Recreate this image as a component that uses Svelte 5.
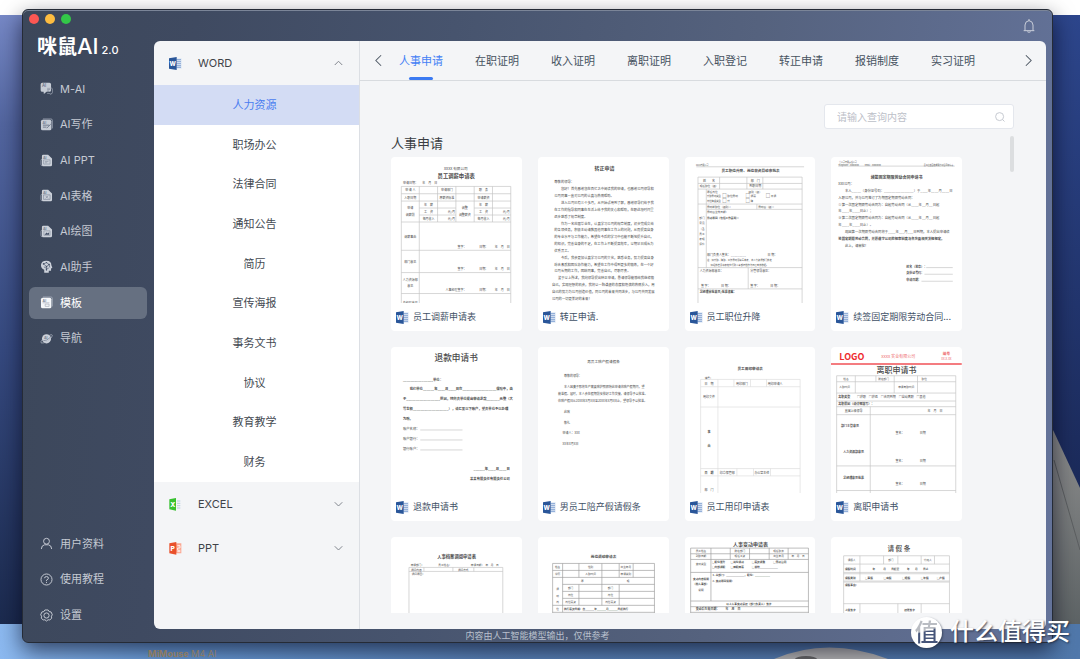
<script>
  const nav = [
    { id: 'chat', label: 'M-AI' },
    { id: 'write', label: 'AI写作' },
    { id: 'ppt', label: 'AI PPT' },
    { id: 'sheet', label: 'AI表格' },
    { id: 'draw', label: 'AI绘图' },
    { id: 'helper', label: 'AI助手' },
    { id: 'template', label: '模板' },
    { id: 'planet', label: '导航' }
  ];
  const tools = [
    { id: 'user', label: '用户资料' },
    { id: 'help', label: '使用教程' },
    { id: 'gear', label: '设置' }
  ];
  const categories = ['人力资源', '职场办公', '法律合同', '通知公告', '简历', '宣传海报', '事务文书', '协议', '教育教学', '财务'];
  const tabs = ['人事申请', '在职证明', '收入证明', '离职证明', '入职登记', '转正申请', '报销制度', '实习证明'];

  let activeNav = $state('template');
  let activeCategory = $state('人力资源');
  let activeTab = $state('人事申请');
  let query = $state('');

  // Each preview: `grid` is the ruled lines, `text` rows are [x, baseline, size, string, anchor, weight, colour].
  const docs = [
    {
      name: '员工调薪申请表',
      grid: 'M31 439V88H360V439M31 110H360M31 132H360M31 195H360M31 280H360M31 347H360M31 410H360M85 88V439M140 88V195M195 88V195M250 88V195M305 88V195M85 153H195M85 174H195M250 153H360M250 174H360',
      text: [
        [195, 38, 11, 'XXXX 有限公司', 'm'], [196, 63, 16, '员工调薪申请表', 'm', 700],
        [36, 81, 9, '申请日期：　　年　月　日'],
        [58, 103, 9, '申 请 人', 'm'], [168, 103, 9, '申请部门', 'm'], [278, 103, 9, '职　务', 'm'],
        [58, 125, 9, '入职日期', 'm'], [168, 125, 9, '原薪资标准', 'm'], [278, 125, 9, '申请薪资', 'm'],
        [58, 157, 9, '申请', 'm'], [58, 178, 9, '调薪前', 'm'], [113, 146, 9, '年　薪', 'm'], [113, 167, 9, '工　资', 'm'], [113, 188, 9, '每月收入', 'm'],
        [192, 167, 9, '元/月', 'e'], [192, 188, 9, '元/月', 'e'], [222, 157, 9, '调整', 'm'], [222, 178, 9, '调整薪资', 'm'],
        [278, 146, 9, '年　薪', 'm'], [278, 167, 9, '工　资', 'm'], [278, 188, 9, '每月收入', 'm'], [357, 167, 9, '元/月', 'e'], [357, 188, 9, '元/月', 'e'],
        [58, 242, 9, '调薪事由', 'm'], [200, 272, 9, '签字：'], [265, 272, 9, '日期：'], [357, 272, 9, '年　月　日', 'e'],
        [58, 317, 9, '部门意见', 'm'], [200, 340, 9, '签字：'], [265, 340, 9, '日期：'], [357, 340, 9, '年　月　日', 'e'],
        [58, 371, 9, '人力资源部', 'm'], [58, 391, 9, '意见', 'm'], [164, 401, 9, '人事经理签字：'], [265, 401, 9, '日期：'], [357, 401, 9, '年　月　日', 'e'],
        [58, 442, 9, '总经理意见', 'm']
      ]
    },
    {
      name: '转正申请.',
      grid: '',
      text: [
        [200, 40, 15, '转正申请', 'm', 700],
        [49, 79, 10, '尊敬的领导：'],
        [69, 100, 10, '您好！首先感谢您在百忙之中阅读我的申请，也感谢公司领导和'],
        [49, 120, 10, '公司同事一直对公司的认真与热情帮助。'],
        [69, 141, 10, '进入公司已有三个多月，从开始试用到了解，感谢领导们给予我'],
        [49, 162, 10, '在工作的指导和同事在生活上给予我的关心和帮助，在职这段时间里'],
        [49, 182, 10, '逐步熟悉了规章制度。'],
        [69, 203, 10, '作为一名应届毕业生，认真学习公司的规章制度，初步完成交给'],
        [49, 223, 10, '的各项任务，积极主动请教其他同事在工作上的问题，从而提高自身'],
        [49, 244, 10, '的专业水平与工作能力，希望在今后的学习中也能不断地提升自己，'],
        [49, 264, 10, '的知识，完善自身的不足，在工作上不断提高效率，以期早日成长为'],
        [49, 285, 10, '优秀员工。'],
        [69, 305, 10, '今后，我会更加认真学习公司的文化，熟悉业务，努力提高自身'],
        [49, 326, 10, '综合素质和团队协作能力，希望在工作中得到更多的锻炼，在一个好'],
        [49, 346, 10, '公司长期的工作，团结同事，完善自己，尽职尽责。'],
        [60, 367, 10, '鉴于以上所述，我向领导提出转正申请，恳请领导能够给我继续锻'],
        [42, 388, 10, '自己，实现理想的机会，我将以一颗谦虚的态度和饱满的热情投入，用'],
        [42, 408, 10, '自己的努力为公司创造价值，同公司的未来共同进步，与公司共同发展'],
        [42, 429, 10, '公司的一切更美好的未来！']
      ]
    },
    {
      name: '员工职位升降',
      grid: 'M34 29H358M39 439V60H352V439M39 79H352M39 96H352M39 141H352M64 157H352M39 332H352M39 396H352M104 60V96M186 60V96M234 60V96M64 96V332M190 332V396M216 141V157',
      text: [
        [33, 27, 6, 'XXXX有限公司'], [197, 45, 11, '员工职位升降、岗位薪资异动审批表', 'm', 700],
        [72, 74, 9, '姓　　名', 'm'], [211, 74, 9, '部　门', 'm'],
        [72, 91, 8, '现任职位（级）', 'm'], [211, 91, 9, '到职日期', 'm'], [82, 107, 8, '原任岗位', 'm'], [211, 107, 8, '级别（级）', 'm'],
        [66, 121, 7, '升职异动类型'], [112, 121, 13, '□'], [127, 121, 8, '职位异动'], [182, 121, 13, '□'], [197, 121, 8, '调薪'], [243, 121, 13, '□'], [258, 121, 8, '平调'],
        [66, 136, 7, '岗位降级类型'], [112, 136, 13, '□'], [127, 136, 8, '升'], [182, 136, 13, '□'], [197, 136, 8, '降'],
        [66, 153, 8, '异动前职位（级别）：'], [220, 153, 8, '异动后（级）：'], [66, 169, 8, '异动后生效日期：'],
        [51, 185, 8, '部门', 'm'], [51, 202, 8, '意见', 'm'], [51, 218, 8, '（含', 'm'], [51, 233, 8, '员工', 'm'], [51, 249, 8, '表现', 'm'], [51, 265, 8, '评价', 'm'],
        [66, 186, 8, '异动原因（包括工作表现）：', 's', 700],
        [66, 298, 9, '部门负责人签名：_________'], [248, 298, 9, '日 期：'],
        [66, 313, 7, '注：如升职、降职、工作异动须填写本表，请人力资源部门核定'], [77, 328, 7, '如经核准须将表格交行政人事部存档作为日后考核依据。'],
        [44, 345, 9, '人力资源部意见：'], [196, 345, 9, '分管领导意见：'], [48, 391, 9, '签 字：　　　　日 期：'], [196, 391, 9, '签 字：　　　　日 期：'],
        [44, 408, 9, '总经理审批意见/批准备案：', 's', 700]
      ]
    },
    {
      name: '续签固定期限劳动合同...',
      grid: 'M22 27H372M286 332H366M281 352H366M272 373H366',
      text: [
        [24, 19, 6, '某公司有限责任公司'], [22, 26, 6, 'Telephone：00000000　　　Email：00000000'], [368, 26, 6, '员工续签固定期限劳动合同申请表', 'e'],
        [197, 65, 12, '续签固定期限劳动合同申请书', 'm', 700],
        [22, 84, 10, 'XXX公司：'], [42, 104, 10, '本人_____（身份证号码：________________）于____年____月____日'],
        [22, 125, 10, '入职公司，并与公司签订了为期固定期限劳动合同：'],
        [22, 146, 10, '①第一次固定期限劳动合同为：自起劳动合同（从____年__月__日起'], [22, 166, 10, '年____年____日止）；'],
        [22, 187, 10, '②第二次固定期限劳动合同为：自起劳动合同（从____年__月__日起'], [22, 208, 10, '年____年____日止）。'],
        [42, 228, 10, '现因第一次期限劳动合同将于____年___月___日到期，本人提出申请续'],
        [22, 249, 10, '签固定期限劳动合同，并愿遵守公司的规章制度与各方面相关法规规定。', 's', 700], [42, 270, 10, '此上，请审批！'],
        [226, 332, 9, '姓名（签章）：', 's', 700], [226, 352, 9, '身份证号码：', 's', 700], [226, 373, 9, '申请日期：', 's', 700]
      ]
    },
    {
      name: '退款申请书',
      grid: 'M88 249H215M88 279H215M88 309H215',
      text: [
        [196, 43, 26, '退款申请书', 'm', 500],
        [36, 101, 10, '________________单位：', 's', 700], [56, 130, 10, '我们单位______年____月____日在__________________保险中，由', 's', 700],
        [36, 160, 10, '于__________________原因，特向贵单位提出申请退款_______元整（大', 's', 700], [36, 190, 10, '写金额___________________），请汇至以下账户，望贵单位予以办理', 's', 700],
        [36, 220, 10, '为盼。', 's', 700], [36, 250, 10, '账户名称：'], [36, 280, 10, '账户银行：'], [36, 310, 10, '银行账户：'],
        [357, 368, 10, '______年____月____日', 'e', 700], [357, 398, 10, '某某有限责任有限责任公司', 'e', 700]
      ]
    },
    {
      name: '男员工陪产假请假条',
      grid: '',
      text: [
        [197, 49, 11, '男员工陪产假请假条', 'm'], [78, 90, 9, '尊敬的领导：'],
        [78, 124, 9, '本人因妻子即将生产需要陪护照顾特此申请休陪产假期间，望'], [60, 144, 9, '能准假。届时，本人会在假期前安排好工作交接，请领导予以批准。'],
        [60, 164, 9, '休陪产假日从20XX年X月X日至20XX年X月X日止，望领导予以批准。'],
        [78, 197, 9, '此致'], [78, 230, 9, '敬礼'], [74, 262, 9, '申请人：XXX'], [74, 294, 9, 'XX年X月X日']
      ]
    },
    {
      name: '员工用印申请表',
      grid: 'M47 439V97H346V439M47 119H346M47 180H346M47 365H346M47 387H346M99 97V439M147 97V119M197 97V119M245 97V119M156 365V387M206 365V387M257 365V387',
      faint: true,
      text: [
        [196, 69, 11, '员工用印申请表', 'm', 700], [59, 95, 8, '编号：'],
        [72, 113, 9, '日　期', 'm'], [171, 113, 9, '用印部门', 'm'], [271, 113, 9, '用印申请人', 'm'], [72, 154, 9, '用印文件', 'm'],
        [72, 258, 9, '事', 'm', 700], [72, 299, 9, '由', 'm', 700],
        [72, 381, 9, '日　期', 'm', 700], [127, 381, 9, '印章保管部', 'm'], [231, 381, 9, '办公室主任', 'm'], [72, 433, 9, '部　门', 'm']
      ]
    },
    {
      name: '离职申请书',
      grid: 'M17 439V86H375V439M17 104H375M17 138H375M17 162H375M17 179H375M17 203H375M17 357H375M17 431H375M73 86V138M135 86V104M190 86V138M260 86V138M118 179V439',
      banner: true,
      text: [
        [25, 39, 27, 'LOGO', 's', 700, '#ee2b2f'], [202, 33, 12, 'XXXX 实业有限公司', 'm', 400, '#ee6a6c'], [347, 24, 11, '编号', 'm', 700, '#ee6a6c'], [347, 39, 9, 'XX-X-XX', 'm', 400, '#ee6a6c'],
        [197, 78, 24, '离职申请书', 'm', 500],
        [45, 98, 8, '姓名', 'm'], [158, 98, 8, '所在部门', 'm'], [280, 98, 8, '职位', 'm'], [41, 124, 8, '入职时间', 'm'], [226, 124, 8, '申请离职时间', 'm'],
        [22, 154, 9, '离职类型', 's', 700], [78, 154, 9, '□辞职　□辞退　□合同到期　□自动离职　□其他'],
        [22, 173, 9, '离职原因（请详细填写）：', 's', 700], [68, 195, 9, '直属上级领导', 'm'], [335, 195, 9, '年　月　日', 'e'],
        [30, 241, 9, '部门主管意见', 's', 700], [194, 261, 9, '签名：'], [267, 261, 9, '日期'],
        [68, 318, 9, '人力资源部意见', 'm', 700], [194, 345, 9, '签名：'], [267, 345, 9, '日期'],
        [68, 396, 9, '总经理意见批准', 'm', 700], [194, 414, 9, '签名：'], [267, 414, 9, '日期']
      ]
    },
    {
      name: '人事档案调阅申请表',
      grid: 'M54 439V91H336V439M54 103H336M99 91V103M186 91V103M249 91V103',
      text: [
        [197, 62, 13, '人事档案调阅申请表', 'm', 700], [59, 86, 8, '申请部门：'], [142, 86, 8, '员工姓名：'], [240, 86, 8, '申请日期：　年　月　日'],
        [76, 101, 8, '调阅内容', 'm'], [217, 101, 8, '调阅方式', 'm'], [62, 114, 8, '调阅原因：']
      ]
    },
    {
      name: '岗位调动申请表',
      grid: 'M44 439V79H350V439M44 100H350M44 121H350M74 142H350M74 163H350M74 184H350M44 205H350M44 226H350M74 79V226M123 79V121M192 79V205M244 79V121M286 79V121M123 142V205M244 142V205',
      dark: true,
      text: [
        [197, 62, 11, '岗位调动申请表', 'm', 700], [59, 93, 8, '姓名', 'm'], [158, 93, 8, '性别', 'm'], [264, 93, 8, '出生年月', 'm'],
        [59, 114, 8, '学历', 'm'], [158, 114, 8, '入职时间', 'm'], [264, 114, 8, '申请类别', 'm'], [133, 135, 8, '原', 'm'], [271, 135, 8, '现', 'm'],
        [59, 158, 8, '调', 'm'], [59, 179, 8, '动', 'm'], [59, 199, 8, '岗', 'm'], [59, 219, 8, '位', 'm'],
        [98, 156, 8, '部门', 'm'], [218, 156, 8, '部门', 'm'], [98, 176, 8, '岗位', 'm'], [218, 176, 8, '岗位', 'm'], [98, 197, 8, '岗位薪资', 'm'], [218, 197, 8, '岗位薪资', 'm'],
        [78, 219, 8, '执行薪资日期：自______年______月______日起执行', 's', 700]
      ]
    },
    {
      name: '人事变动申请表',
      grid: 'M17 439V33H371V439M17 50H371M17 67H371M17 106H371M17 192H371M17 209H371M17 226H371M78 33V192M136 33V67M194 33V67M253 33V67M310 33V67',
      dark: true,
      text: [
        [197, 28, 15, '人事变动申请表', 'm', 700], [48, 44, 8, '员工姓名', 'm'], [165, 44, 8, '所在部门', 'm'], [281, 44, 8, '现任职务', 'm'],
        [48, 61, 8, '到职日期', 'm'], [165, 61, 8, '现任工资', 'm'], [281, 61, 8, '出生年月', 'm'], [340, 61, 8, '年　月　日', 'm'], [48, 84, 8, '变动类型', 'm'],
        [81, 77, 8, '□职位晋升　　□岗位调动　　　□薪资调整　　　□劳动合同', 's', 700], [81, 92, 8, '□内部调职　　□降职降薪　　　□其他____________', 's', 700],
        [83, 118, 8, '1. 从部门：____________，职位：__________', 's', 700], [83, 134, 8, '2. 变动原因说明：', 's', 700],
        [48, 130, 8, '变动内容说明', 'm', 700], [48, 145, 8, '（附人事部）', 'm', 700], [48, 162, 8, '说明', 'm'],
        [192, 203, 8, '以上人事变动须经（部门负责人）签字', 'm', 700], [32, 220, 9, '变动后生效日期：　　年　月　日', 's', 700]
      ]
    },
    {
      name: '请假条',
      grid: 'M38 439V56H356V439M38 81H356M38 106H356M38 110H356M38 132H356M38 135H356M38 200H356M87 56V81M158 56V81M201 56V81M271 56V81M311 56V81M87 81V132M87 200V439M201 200V439M271 200V439',
      text: [
        [204, 41, 20, '请 假 条', 'm', 500], [62, 73, 8, '请假人', 'm'], [180, 73, 8, '部门', 'm'], [291, 73, 8, '代班人', 'm'],
        [58, 98, 8, '请假时间', 'm', 700], [125, 98, 8, '年　　　月　　日起至　　　年　　月　　日止', 's', 700],
        [58, 125, 8, '请假类别', 'm', 700], [102, 125, 8, '□事假　　　　□病假　　　　□婚假　　　　□年假　　　□产假', 's', 700],
        [42, 147, 8, '请假事由：', 's', 700], [58, 222, 8, '上级签字', 'm', 700], [236, 222, 8, '经理签字', 'm', 700]
      ]
    }
  ];
  const anchors = { s: 'start', m: 'middle', e: 'end' };
</script>

{#snippet office(kind)}
  <svg class="office" viewBox="0 0 39 39" aria-hidden="true">
    {#if kind === 'word'}
      <path d="M20 4H38V35H20z" fill="#dfe8f5" />
      <path d="M22 8H36M22 14H36M22 20H36M22 26H36M22 31H36" stroke="#6f94cc" stroke-width="2.4" />
      <path d="M0 4L23 0V39L0 35z" fill="#2a5699" />
      <text x="11" y="26" font-size="18">W</text>
    {:else if kind === 'excel'}
      <path d="M24 9H34M24 16H34M24 23H34M24 30H34" stroke="#b9cfdd" stroke-width="3" />
      <path d="M1 4L21 0V38L1 34z" fill="#38c130" />
      <text x="11" y="26" font-size="20">X</text>
    {:else}
      <path d="M20 4H37V34H20z" fill="#fba792" />
      <path d="M25 11H33V18H26V25H34M25 29H34" fill="none" stroke="#fff" stroke-width="2.4" />
      <path d="M1 4L22 0V38L1 34z" fill="#e9502b" />
      <text x="11" y="26" font-size="20">P</text>
    {/if}
  </svg>
{/snippet}

{#snippet glyph(id)}
  <svg class="glyph" viewBox="0 0 40 40" aria-hidden="true">
    {#if id === 'chat'}
      <path d="M7 2H29Q34 2 34 7V25Q34 30 29 30H20L12 37L11 30H7Q2 30 2 25V7Q2 2 7 2z" fill="#c6ccd5" />
      <text x="6" y="16" font-size="13">AI</text>
      <path d="M22 19H36Q39 20 39 24V32Q38 36 35 35L34 38L28 35H22" fill="none" stroke="#aab2bf" stroke-width="2" />
      <path d="M22 22H31M22 28H28" stroke="#5c677c" stroke-width="2" />
    {:else if id === 'user'}
      <circle cx="20" cy="13" r="9" class="line" /><path d="M4 37Q5 25 14 24H26Q35 25 36 37" class="line" />
    {:else if id === 'help'}
      <circle cx="20" cy="20" r="17" class="line" /><path d="M14 16Q14 11 20 11Q26 11 26 16Q26 19 20 22V25M20 28V31" class="line" />
    {:else if id === 'gear'}
      <path d="M15 3H25L28 8L34 9L38 18L35 22L36 28L30 34L25 33L20 37L15 33L10 34L4 28L5 22L2 18L6 9L12 8z" class="line" /><circle cx="20" cy="20" r="8" class="line" />
    {:else if id === 'helper'}
      <path d="M20 2Q35 2 35 16L38 24L34 26V33H27V39H13V30Q3 26 3 15Q4 2 20 2z" fill="#ccd1da" />
      <path d="M11 12L20 8L28 14L20 20L11 12M20 20V32M28 14L30 23M12 21L20 26L27 25" fill="none" stroke="#445067" stroke-width="2" />
      <g fill="#445067"><circle cx="11" cy="12" r="2.5" /><circle cx="20" cy="8" r="2" /><circle cx="28" cy="14" r="2.5" /><circle cx="20" cy="20" r="2.5" /><circle cx="20" cy="30" r="2.5" /></g>
    {:else if id === 'planet'}
      <circle cx="20" cy="21" r="14" fill="#ccd1da" />
      <path d="M8 22Q0 31 4 34Q11 36 25 27Q39 16 38 10Q36 6 29 10" fill="none" stroke="#b5bdc9" stroke-width="2" />
      <path d="M10 27Q22 27 31 17" fill="none" stroke="#6b768a" stroke-width="2" /><text x="12" y="21" font-size="11">AI</text>
    {:else if id === 'template' || id === 'write'}
      <path d="M9 3H34Q38 3 38 7V32" fill="none" stroke="#b5bdc9" stroke-width="2" />
      <rect x="3" y="5" width="32" height="33" rx="5" fill={id === 'template' ? '#f5f7fa' : '#c6ccd5'} />
      <text x="8" y="17" font-size="11">AI</text>
      {#if id === 'template'}
        <path d="M8 21H29M16 25H28V32H16z" fill="none" stroke="#a2a9b5" stroke-width="2" />
      {:else}
        <path d="M9 22H28M9 28H20M21 31L33 19" stroke="#5c677c" stroke-width="2.4" />
      {/if}
    {:else}
      <path d="M6 16Q3 16 3 20V32Q3 36 7 36" fill="none" stroke="#b5bdc9" stroke-width="2" />
      <path d="M10 2H25L37 14V34Q37 38 33 38H10Q6 38 6 34V6Q6 2 10 2z" fill="#ccd1da" />
      <text x="9" y="14" font-size="11">AI</text>
      {#if id === 'ppt'}
        <path d="M11 18H31V31H11zM15 23H26M15 27H22" fill="none" stroke="#8b94a4" stroke-width="2" />
      {:else if id === 'sheet'}
        <path d="M11 18H31V32H11zM17 21L25 29M25 21L17 29" fill="none" stroke="#7d8799" stroke-width="2" />
      {:else}
        <path d="M12 18H31V32H12z" fill="none" stroke="#8b94a4" stroke-width="2" /><path d="M14 30L20 23L24 26L28 22V30z" fill="#445067" />
      {/if}
    {/if}
  </svg>
{/snippet}

{#snippet chevron(points)}
  <svg class="chevron" viewBox="0 0 12 12" aria-hidden="true"><polyline {points} /></svg>
{/snippet}

<div class="desktop">
  <svg class="wallpaper" viewBox="0 0 1080 659" preserveAspectRatio="none" aria-hidden="true">
    <defs>
      <linearGradient id="sky" x2="0" y2="1"><stop offset="0" stop-color="#7688c6" /><stop offset=".18" stop-color="#52659f" /><stop offset=".55" stop-color="#35497f" /><stop offset="1" stop-color="#1b2a4e" /></linearGradient>
      <linearGradient id="night" x2="0" y2="1"><stop offset="0" stop-color="#2d468c" /><stop offset="1" stop-color="#16224b" /></linearGradient>
      <linearGradient id="desk"><stop offset="0" stop-color="#8cb9f0" /><stop offset=".15" stop-color="#6ca0dd" /><stop offset=".45" stop-color="#5a83b8" /><stop offset="1" stop-color="#5078ab" /></linearGradient>
      <linearGradient id="metal" x2="0" y2="1"><stop offset="0" stop-color="#929292" /><stop offset="1" stop-color="#5d6365" /></linearGradient>
    </defs>
    <rect width="1080" height="659" fill="#fff" />
    <rect y="15" width="540" height="610" fill="url(#sky)" />
    <rect x="540" y="15" width="540" height="610" fill="url(#night)" />
    <path d="M1040 405L1054 432L1080 488V625H1040z" fill="url(#metal)" />
    <path d="M1054 460L1080 550" stroke="#5c5f61" />
    <rect y="624" width="1080" height="35" fill="url(#desk)" />
    <path d="M774 659Q828 636 888 659z" fill="#b4b4b4" />
    <ellipse cx="806" cy="659" rx="11" ry="3" fill="#666" />
  </svg>

  <main class="window">
    <aside class="sidebar">
      <div class="lights"><i class="red"></i><i class="amber"></i><i class="green"></i></div>
      <h1 class="brand">咪鼠<span>AI</span><small>2.0</small></h1>
      <nav class="menu">
        {#each nav as item}
          <button class:on={item.id === activeNav} onclick={() => (activeNav = item.id)}>{@render glyph(item.id)}{item.label}</button>
        {/each}
      </nav>
      <nav class="menu tools">
        {#each tools as item}
          <button>{@render glyph(item.id)}{item.label}</button>
        {/each}
      </nav>
    </aside>

    <div class="body">
      <header class="topbar">
        <button aria-label="通知">
          <svg class="bell" viewBox="0 0 36 42" aria-hidden="true"><path d="M2 35H34M6 35V18Q7 6 18 5Q29 6 30 18V35M15 4Q18 0 21 4M13 38Q18 42 23 38" /></svg>
        </button>
      </header>

      <div class="panel">
        <section class="library">
          <button class="group">{@render office('word')}<span>WORD</span>{@render chevron('1,8 6,3 11,8')}</button>
          <ul>
            {#each categories as c}
              <li><button class:on={c === activeCategory} onclick={() => (activeCategory = c)}>{c}</button></li>
            {/each}
          </ul>
          <button class="group">{@render office('excel')}<span>EXCEL</span>{@render chevron('1,3 6,8 11,3')}</button>
          <button class="group">{@render office('ppt')}<span>PPT</span>{@render chevron('1,3 6,8 11,3')}</button>
        </section>

        <section class="content">
          <div class="tabbar">
            <button class="arrow" aria-label="上一页"><svg viewBox="0 0 8 12"><polyline points="7,0 1,6 7,12" /></svg></button>
            <div class="tabs">
              {#each tabs as t}
                <button class:on={t === activeTab} onclick={() => (activeTab = t)}>{t}</button>
              {/each}
            </div>
            <button class="arrow" aria-label="下一页"><svg viewBox="0 0 8 12"><polyline points="1,0 7,6 1,12" /></svg></button>
          </div>

          <div class="page">
            <label class="search">
              <input type="text" placeholder="请输入查询内容" aria-label="查询" bind:value={query} />
              <svg viewBox="0 0 10 10" aria-hidden="true"><circle cx="4.6" cy="4.6" r="4" /><path d="M7.5 7.5L9.5 9.5" /></svg>
            </label>
            <div class="results">
              <div class="list">
                <h2>{activeTab}</h2>
                <div class="cards">
                  {#each docs as d}
                    <article>
                      <svg class="preview" class:faint={d.faint} class:dark={d.dark} viewBox="0 0 393 438" aria-hidden="true">
                        {#if d.banner}<path d="M0 51H393" class="rule" />{/if}
                        <path d={d.grid} class="grid" />
                        {#each d.text as [x, y, size, str, a = 's', weight = 400, fill = null]}
                          <text {x} {y} font-size={size} text-anchor={anchors[a]} font-weight={weight} {fill}>{str}</text>
                        {/each}
                      </svg>
                      <h3>{@render office('word')}<span>{d.name}</span></h3>
                    </article>
                  {/each}
                </div>
              </div>
              <div class="thumb"></div>
            </div>
          </div>
        </section>
      </div>
      <footer>内容由人工智能模型输出，仅供参考</footer>
    </div>
  </main>

  <p class="caption"><b>MiMouse</b> M4 AI</p>
  <div class="watermark"><span class="seal"><span>值</span></span>什么值得买</div>
</div>

<style>
  :global(body) { margin: 0; }
  * { box-sizing: border-box; }
  h1, h2, h3, p, ul { margin: 0; padding: 0; font-weight: 400; }
  ul { list-style: none; }
  button { border: 0; background: none; padding: 0; font: inherit; color: inherit; cursor: pointer; }
  .desktop {
    position: relative; display: flex; height: 100vh; overflow: hidden;
    padding: 9px 27px 16px 22px;
    font: 11px/16px Inter, "Noto Sans CJK SC", sans-serif; color: #444a52;
  }
  .wallpaper { position: absolute; inset: 0; width: 100%; height: 100%; }
  .caption { position: absolute; left: 148px; bottom: 0; font-size: 9px; line-height: 10px; color: #8d7a5f; }
  .window {
    position: relative; flex: 1; display: flex; min-width: 0;
    border: 1px solid #252b36; border-radius: 6px;
    background: linear-gradient(95deg, #3c475a 0%, #3f4a61 16%, #47546e 40%, #55627e 68%, #64739a 100%);
    box-shadow: inset 0 1px 0 #7b8598, 0 8px 22px rgba(0, 0, 20, .62);
  }
  .sidebar { width: 131px; flex: none; display: flex; flex-direction: column; padding: 4px 7px 9px 6px; color: #c5cad3; }
  .lights { display: flex; gap: 6px; }
  .lights i { width: 10px; height: 10px; border-radius: 50%; }
  .red { background: #fc5753; }
  .amber { background: #fdbc40; }
  .green { background: #33c748; }
  .brand { display: flex; align-items: baseline; height: 22px; margin: 11px 0 14px 8px; font-size: 20px; line-height: 22px; font-weight: 700; color: #fff; }
  .brand span { font-weight: 500; font-size: 22px; }
  .brand small { font-size: 11px; font-weight: 500; margin-left: 3px; }
  .menu { display: grid; grid-auto-rows: 1fr; align-items: center; height: 285px; }
  .tools { height: 107px; margin-top: auto; }
  .menu button { display: flex; align-items: center; gap: 7px; height: 32px; padding-left: 11px; border-radius: 6px; text-align: left; }
  .menu button.on { background: #667081; color: #fff; }
  .glyph { width: 13px; height: 13px; flex: none; }
  .glyph text { font-family: Inter, sans-serif; font-weight: 600; fill: #6b768a; }
  .line { fill: none; stroke: #c5cad3; stroke-width: 3; }
  .body { flex: 1; min-width: 0; display: flex; flex-direction: column; padding-right: 6px; }
  .topbar { height: 31px; flex: none; display: flex; justify-content: flex-end; padding: 0 11px 0 0; }
  .bell { display: block; width: 12px; height: 14px; fill: none; stroke: #c9ced9; stroke-width: 3; }
  .panel { flex: 1; min-height: 0; display: flex; border-radius: 6px; overflow: hidden; background: #f4f5f7; }
  .library { width: 206px; flex: none; border-right: 1px solid #dcdfe4; }
  .group { display: flex; align-items: center; width: 100%; height: 44px; padding: 0 16px 0 15px; text-align: left; color: #3f4348; }
  .group span { flex: 1; padding-left: 16px; }
  .office { width: 13px; height: 13px; flex: none; }
  .office text { font-family: Inter, sans-serif; font-weight: 800; fill: #fff; text-anchor: middle; }
  .chevron { width: 9px; height: 9px; fill: none; stroke: #7e838a; stroke-width: 1.3; }
  ul { display: grid; grid-auto-rows: 1fr; height: 397px; background: #fff; }
  li { display: grid; }
  li button { padding-right: 4px; }
  li button.on { background: #d3dcf4; color: #4a7df0; }
  .content { flex: 1; min-width: 0; display: flex; flex-direction: column; }
  .tabbar { flex: none; display: flex; height: 40px; border-bottom: 1px solid #d8dbdf; }
  .arrow { width: 36px; flex: none; display: grid; place-items: center; }
  .arrow svg { width: 7px; height: 11px; fill: none; stroke: #4e5864; stroke-width: 1.2; overflow: visible; }
  .tabs { flex: 1; min-width: 0; display: flex; gap: 32px; padding-left: 3px; overflow: hidden; color: #46525f; }
  .tabs button { position: relative; flex: none; white-space: nowrap; }
  .tabs .on { color: #4380f5; }
  .tabs .on::after { content: ""; position: absolute; left: 10px; right: 10px; bottom: 0; height: 3px; border-radius: 2px; background: #3b7af2; }
  .page { flex: 1; min-height: 0; display: flex; flex-direction: column; padding: 23px 32px 16px 31px; }
  .search { flex: none; align-self: flex-end; display: flex; align-items: center; width: 190px; height: 25px; padding: 0 8px 0 12px; border: 1px solid #e4e7ed; border-radius: 3px; background: #fff; }
  .search input { flex: 1; min-width: 0; border: 0; outline: 0; padding: 0; background: none; font: inherit; font-size: 10px; }
  .search input::placeholder { color: #bcc0c8; opacity: 1; }
  .search svg { width: 10px; height: 10px; fill: none; stroke: #c0c4cc; stroke-width: .9; }
  .results { flex: 1; min-height: 0; display: flex; gap: 48px; margin-top: 7px; overflow: hidden; }
  .list { flex: 1; min-width: 0; }
  h2 { font-size: 13px; line-height: 14px; margin-bottom: 7px; color: #3a3d42; }
  .cards { display: grid; grid-template-columns: repeat(4, 1fr); gap: 16px; }
  article { display: flex; flex-direction: column; height: 174px; border-radius: 4px; overflow: hidden; background: #fff; }
  .preview { width: 100%; flex: 1; min-height: 0; font-family: "Noto Sans CJK SC", sans-serif; }
  .preview text:not([fill]) { fill: #4b4b4b; }
  .grid { fill: none; stroke: #c2c2c2; stroke-width: 2; }
  .faint .grid { stroke: #dcdcdc; }
  .dark .grid { stroke: #9c9c9c; }
  .rule { stroke: #f47c80; stroke-width: 6; }
  h3 { flex: none; display: flex; align-items: center; gap: 4px; height: 28px; padding-left: 5px; font-size: 9px; color: #3f5166; white-space: nowrap; }
  .thumb { width: 4px; height: 36px; flex: none; border-radius: 2px; background: #dcdee0; }
  footer { flex: none; height: 13px; margin: 0 -6px 0 -131px; line-height: 13px; font-size: 9px; text-align: center; color: #b9c0cd; }
  .watermark { position: absolute; right: 10px; bottom: 11px; display: flex; align-items: center; gap: 8px; font-size: 24px; line-height: 32px; font-weight: 500; color: #fff; text-shadow: 1px 1px 2px rgba(30, 40, 60, .8); }
  .seal { display: grid; place-items: center; width: 31px; height: 31px; border-radius: 50%; background: #fff; text-shadow: none; box-shadow: 1px 1px 2px rgba(40, 50, 70, .6); }
  .seal span { background: linear-gradient(165deg, #b9bcc2 42%, #46557a 46%); background-clip: text; color: transparent; }
</style>
